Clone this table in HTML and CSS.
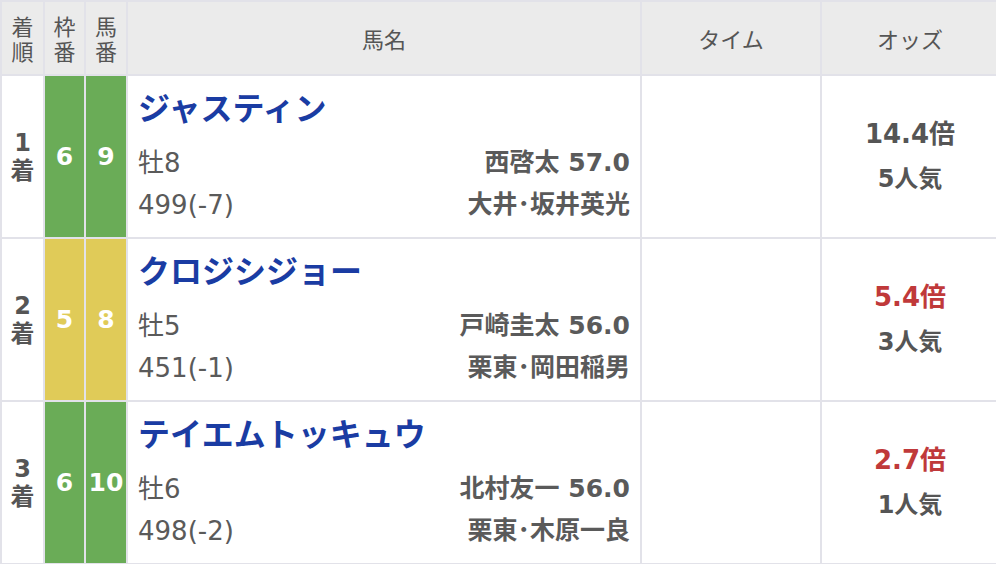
FILE: index.html
```html
<!DOCTYPE html>
<html>

<head>
    <meta name="viewport" content="width=device-width, initial-scale=1.0" />
    <title>レース結果</title>
    <link rel="stylesheet" href="styles.css">
</head>

<body>
    <table class="result">
        <colgroup>
            <col class="c-rank">
            <col class="c-waku">
            <col class="c-uma">
            <col class="c-name">
            <col class="c-time">
            <col class="c-odds">
        </colgroup>
        <thead>
            <tr>
                <th class="stack">着<br>順</th>
                <th class="stack">枠<br>番</th>
                <th class="stack">馬<br>番</th>
                <th>馬名</th>
                <th>タイム</th>
                <th>オッズ</th>
            </tr>
        </thead>
        <tbody>
            <tr>
                <td class="rank">1<br>着</td>
                <td class="num waku6">6</td>
                <td class="num waku6">9</td>
                <td class="horse">
                    <div class="horse-name">ジャスティン</div>
                    <div class="info"><span>牡8</span><span class="jockey">西啓太 57.0</span></div>
                    <div class="info"><span>499(-7)</span><span class="jockey">大井･坂井英光</span></div>
                </td>
                <td class="time"></td>
                <td class="odds">
                    <div class="odds-val">14.4倍</div>
                    <div class="pop">5人気</div>
                </td>
            </tr>
            <tr>
                <td class="rank">2<br>着</td>
                <td class="num waku5">5</td>
                <td class="num waku5">8</td>
                <td class="horse">
                    <div class="horse-name">クロジシジョー</div>
                    <div class="info"><span>牡5</span><span class="jockey">戸崎圭太 56.0</span></div>
                    <div class="info"><span>451(-1)</span><span class="jockey">栗東･岡田稲男</span></div>
                </td>
                <td class="time"></td>
                <td class="odds">
                    <div class="odds-val hot">5.4倍</div>
                    <div class="pop">3人気</div>
                </td>
            </tr>
            <tr>
                <td class="rank">3<br>着</td>
                <td class="num waku6">6</td>
                <td class="num waku6">10</td>
                <td class="horse">
                    <div class="horse-name">テイエムトッキュウ</div>
                    <div class="info"><span>牡6</span><span class="jockey">北村友一 56.0</span></div>
                    <div class="info"><span>498(-2)</span><span class="jockey">栗東･木原一良</span></div>
                </td>
                <td class="time"></td>
                <td class="odds">
                    <div class="odds-val hot">2.7倍</div>
                    <div class="pop">1人気</div>
                </td>
            </tr>
        </tbody>
    </table>
</body>

</html>
```

FILE: styles.css
```css
html, body {
    margin: 0;
    padding: 0;
    background: #fff;
    overflow: hidden;
}

body {
    font-family: "DejaVu Sans", "Noto Sans CJK JP", sans-serif;
    color: #555;
}

.result {
    border-collapse: collapse;
    table-layout: fixed;
    width: 998px;
}

.result th,
.result td {
    border: 2px solid #e2e2e9;
    padding: 0;
}

.c-rank { width: 43px; }
.c-waku { width: 41px; }
.c-uma { width: 42px; }
.c-name { width: 514px; }
.c-time { width: 180px; }
.c-odds { width: 178px; }

thead th {
    background: #ebebeb;
    height: 72px;
    font-family: "Noto Sans CJK JP", sans-serif;
    font-size: 22px;
    font-weight: normal;
    color: #555;
    text-align: center;
    vertical-align: middle;
}

thead th.stack {
    line-height: 25px;
}

tbody td {
    vertical-align: middle;
}

.rank {
    text-align: center;
    font-size: 24px;
    font-weight: bold;
    line-height: 28px;
}

.num {
    text-align: center;
    color: #fff;
    font-size: 25px;
    font-weight: bold;
}

.waku6 {
    background: #6aac57;
}

.waku5 {
    background: #e0cb58;
}

.result td.horse {
    padding: 10px 10px 11px 10px;
    vertical-align: top;
}

.horse-name {
    font-family: "Noto Sans CJK JP", sans-serif;
    font-size: 32px;
    font-weight: bold;
    color: #1a3ca3;
    line-height: 40px;
    margin-bottom: 16px;
    white-space: nowrap;
}

.info {
    display: flex;
    justify-content: space-between;
    font-size: 26px;
    line-height: 42px;
    color: #5a5a5a;
}

.info .jockey {
    font-weight: bold;
    font-size: 25px;
}

.odds {
    text-align: center;
}

.odds-val {
    font-size: 26px;
    font-weight: bold;
    line-height: 45px;
}

.odds-val.hot {
    color: #c0393a;
}

.pop {
    font-size: 24px;
    font-weight: bold;
    line-height: 45px;
}
```
